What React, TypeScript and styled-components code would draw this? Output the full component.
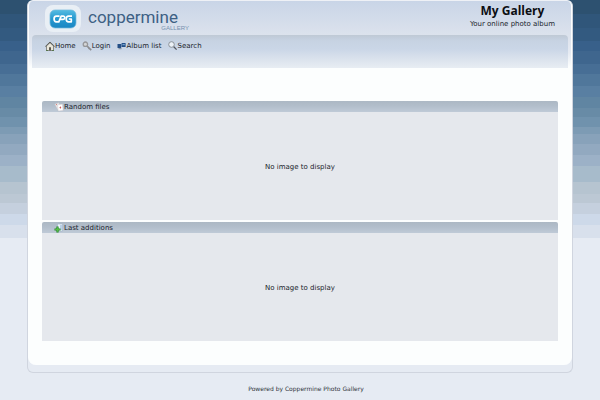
import React from "react";
import styled, { createGlobalStyle } from "styled-components";

const bands: [string, number][] = [
  ["#2d5170", 14], ["#30567a", 28], ["#335a80", 41], ["#38608a", 51], ["#3f668e", 64],
  ["#476e95", 74], ["#50779b", 86], ["#597fa2", 97], ["#6085a2", 108], ["#688ba6", 117],
  ["#7092ad", 127], ["#7d9bb4", 134], ["#88a2ba", 144], ["#92a9c0", 155], ["#9cb1c7", 166],
  ["#a7bbcb", 182], ["#b6c4d0", 194], ["#bcc8d4", 203], ["#c5d0de", 214], ["#cdd9e9", 225],
  ["#d8e0ec", 238],
];

const sky = bands
  .map(([color, end], i) => `${color} ${i ? bands[i - 1][1] : 0}px ${end}px`)
  .join(", ");

const Global = createGlobalStyle`
  * { box-sizing: border-box; }
  body {
    margin: 0;
    color: #20242c;
    font: 7px/10px "DejaVu Sans", Verdana, sans-serif;
    background: #e6ebf3 linear-gradient(${sky}, #e6ebf3 238px) no-repeat;
  }
`;

const Frame = styled.div`
  margin: 0 27px;
  border: 1px solid #d0d5df;
  border-top-color: #eef1f6;
  border-radius: 6px;
  background: #e6ebf3;
`;

const Sheet = styled.div`
  border: 1px solid #fcfefe;
  border-width: 0 1px;
  border-radius: 5px 5px 8px 8px;
  background: #fcfefe;
  margin-bottom: 7px;
  padding-bottom: 24px;
  overflow: hidden;
`;

const Masthead = styled.header`
  padding: 0 3px;
  background: linear-gradient(#c9d5e7, #dde3ed 36px, #e6ebf3 52px, #fcfefe 66px);
`;

const Brand = styled.div`
  display: flex;
  justify-content: space-between;
  height: 34px;
  padding: 0 13px;
`;

const Logo = styled.a`
  display: flex;
  color: #3d6084;
  text-decoration: none;
`;

const Badge = styled.svg`
  width: 36px;
  height: 28px;
  margin: 3px 7px 0 0;
`;

const Wordmark = styled.span`
  display: flex;
  flex-direction: column;
`;

const Name = styled.span`
  height: 24px;
  padding-top: 8px;
  font: 17px/16px Roboto, "Liberation Sans", sans-serif;
`;

const Sub = styled.span`
  margin-right: -11px;
  text-align: right;
  color: #7590ae;
  font: 6px/6px "Liberation Sans", Arial, sans-serif;
`;

const Titles = styled.div`
  text-align: center;
`;

const Title = styled.h1`
  margin: 3px 0 0;
  color: #0c0e12;
  font: bold 12px/14px "Open Sans", "Trebuchet MS", sans-serif;
`;

const Tagline = styled.p`
  margin: 1px 0 0;
`;

const Nav = styled.nav`
  display: flex;
  align-items: flex-start;
  gap: 6px;
  height: 33px;
  padding: 6px 13px;
  border-radius: 4px 4px 0 0;
  background: linear-gradient(#bfc9d5, #c7d3e3 6px, #cad6e7 14px, #d9e1ec 23px, #e8edf3);
`;

const NavLink = styled.a`
  display: flex;
  align-items: center;
  color: inherit;
  text-decoration: none;
`;

const Icon = styled.svg`
  flex: none;
  width: 10px;
  height: 10px;
`;

const Content = styled.main`
  display: grid;
  gap: 2px;
  margin: 33px 13px 0;
`;

const PanelTitle = styled.h2`
  display: flex;
  align-items: center;
  height: 11px;
  margin: 0;
  padding-left: 12px;
  border-radius: 2px 2px 0 0;
  background: linear-gradient(#acb8c4, #b2becb 5px, #bfcad7);
  font-size: 7px;
  line-height: 10px;
  font-weight: normal;
`;

const PanelBody = styled.div`
  display: flex;
  align-items: center;
  justify-content: center;
  height: 108px;
  padding-top: 2px;
  background: #e5e8ed;
`;

const Footer = styled.footer`
  padding: 12px 0 0 12px;
  text-align: center;
  color: #30343c;
  font-size: 6px;
  line-height: 8px;
`;

const HomeIcon = () => (
  <Icon viewBox="0 0 10 10" aria-hidden="true">
    <path d="M1.5 5v4.5h7V5L5 1.8z" fill="#e9e6da" stroke="#66665e" strokeWidth=".7" />
    <path d="M.3 5.5 5 1l4.7 4.5" fill="none" stroke="#55564f" strokeWidth=".9" />
    <path d="M4 9.5V6.2h2v3.3z" fill="#5d5a50" />
    <path d="M1 9.5h2M7 9.5h2" stroke="#58754d" />
  </Icon>
);

const KeyIcon = () => (
  <Icon viewBox="0 0 10 10" aria-hidden="true">
    <path d="m4.5 4.5 4.7 4.7M6.5 8l1.2-1.2" stroke="#8b8c90" strokeWidth="1.7" />
    <circle cx="3.4" cy="3.2" r="2.2" fill="#d4d5d6" stroke="#96979a" strokeWidth="1.3" />
  </Icon>
);

const AlbumIcon = () => (
  <Icon viewBox="0 0 10 10" aria-hidden="true">
    <path d="M.5 3h3.7v4H.5zM4.6 2h4v4h-4z" fill="#244f86" />
    <path d="M5.4 3h2.4v1.2H5.4z" fill="#75a2cf" />
    <path d="M1.5 7h3v1.2h-3z" fill="#8794a4" />
  </Icon>
);

const SearchIcon = () => (
  <Icon viewBox="0 0 10 10" aria-hidden="true">
    <path d="m5.5 5.5 3.1 3.1" stroke="#52555d" strokeWidth="1.3" />
    <circle cx="3.5" cy="3.5" r="2.8" fill="#edf2f8" stroke="#83898f" strokeWidth=".9" />
  </Icon>
);

const CardsIcon = () => (
  <Icon viewBox="0 0 10 10" aria-hidden="true">
    <path d="m.8 2.2 4-1.4 2 6-3 1z" fill="#f1eeee" stroke="#c6c4c8" strokeWidth=".5" />
    <path d="m3.5 2.8 5-.7.7 6.4-5 .6z" fill="#fff" stroke="#c9c5c8" strokeWidth=".5" />
    <path d="m6.3 4.3 1 1.2-.8 1.3-1.1-1.1z" fill="#cf5a58" />
    <path d="m2 2.8 1-.3" stroke="#cf7772" />
  </Icon>
);

const AddIcon = () => (
  <Icon viewBox="0 0 10 10" aria-hidden="true">
    <path d="M3.5 1h5v7h-5z" fill="#edf4fb" stroke="#9cb1c8" strokeWidth=".6" />
    <path d="M7 2v5" stroke="#86abd3" />
    <path d="M3.5 3.5v6M.5 6.5h6" stroke="#27872a" strokeWidth="2.2" />
    <path d="M3.5 4.2v4.6M1.2 6.5h4.6" stroke="#54bf43" strokeWidth="1.2" />
  </Icon>
);

const links = [
  { label: "Home", icon: <HomeIcon /> },
  { label: "Login", icon: <KeyIcon /> },
  { label: "Album list", icon: <AlbumIcon /> },
  { label: "Search", icon: <SearchIcon /> },
];

const panels = [
  { title: "Random files", icon: <CardsIcon /> },
  { title: "Last additions", icon: <AddIcon /> },
];

export default function App() {
  return (
    <>
      <Global />
      <Frame>
        <Sheet>
          <Masthead>
            <Brand>
              <Logo href="#">
                <Badge viewBox="0 0 36 28" role="img" aria-label="CPG">
                  <defs>
                    <linearGradient id="badge" x2="0" y2="1">
                      <stop stopColor="#55bce2" />
                      <stop offset=".5" stopColor="#2598cf" />
                      <stop offset="1" stopColor="#1b86c3" />
                    </linearGradient>
                  </defs>
                  <rect x="0" y="1" width="36" height="27" rx="8" fill="#e9eff5" />
                  <rect x="5" y="6" width="26" height="18" rx="5" fill="url(#badge)" stroke="#70b9dc" strokeWidth=".7" />
                  <g fill="none" stroke="#fff" strokeWidth="1.7" strokeLinejoin="round">
                    <path d="M14.5 12.2h-3.2c-3 0-3 5.6 0 5.6h2.5l2.4-5.6h2c2.3 0 2 3.2 0 3.2h-2.8" />
                    <path d="M27 12.2h-3.4c-3.2 0-3.2 5.6 0 5.6h2.7V15h-2.5" />
                  </g>
                </Badge>
                <Wordmark>
                  <Name>coppermine</Name>
                  <Sub>GALLERY</Sub>
                </Wordmark>
              </Logo>
              <Titles>
                <Title>My Gallery</Title>
                <Tagline>Your online photo album</Tagline>
              </Titles>
            </Brand>
            <Nav>
              {links.map((l) => (
                <NavLink href="#" key={l.label}>
                  {l.icon}
                  {l.label}
                </NavLink>
              ))}
            </Nav>
          </Masthead>
          <Content>
            {panels.map((p) => (
              <section key={p.title}>
                <PanelTitle>
                  {p.icon}
                  {p.title}
                </PanelTitle>
                <PanelBody>No image to display</PanelBody>
              </section>
            ))}
          </Content>
        </Sheet>
      </Frame>
      <Footer>Powered by Coppermine Photo Gallery</Footer>
    </>
  );
}
